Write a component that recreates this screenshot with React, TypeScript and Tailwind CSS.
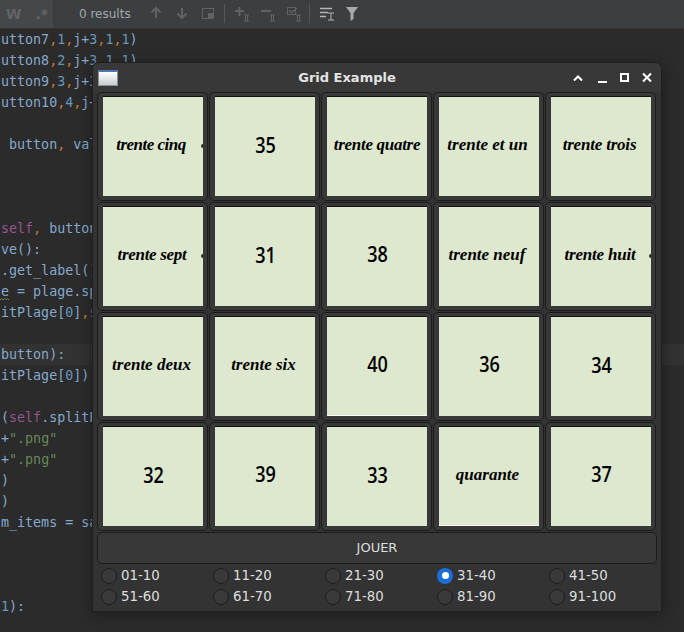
import React from "react";

const B = ({ children }: { children: React.ReactNode }) => <span className="text-[#6897bb]">{children}</span>;
const O = ({ children }: { children: React.ReactNode }) => <span className="text-[#cc7832]">{children}</span>;
const P = ({ children }: { children: React.ReactNode }) => <span className="text-[#94558d]">{children}</span>;
const G = ({ children }: { children: React.ReactNode }) => <span className="text-[#6a8759]">{children}</span>;

const codeLines: React.ReactNode[] = [
  <>utton7<O>,</O><B>1</B><O>,</O>j+<B>3</B><O>,</O><B>1</B><O>,</O><B>1</B>)</>,
  <>utton8<O>,</O><B>2</B><O>,</O>j+<B>3</B><O>,</O><B>1</B><O>,</O><B>1</B>)</>,
  <>utton9<O>,</O><B>3</B><O>,</O>j+<B>3</B><O>,</O><B>1</B><O>,</O><B>1</B>)</>,
  <>utton10<O>,</O><B>4</B><O>,</O>j+<B>3</B></>,
  "",
  <> button<O>,</O> value</>,
  "",
  "",
  "",
  <><P>self</P><O>,</O> button</>,
  "ve():",
  ".get_label()",
  "e = plage.split",
  <>itPlage[<B>0</B>]<O>,</O><P>self</P></>,
  "",
  "button):",
  <>itPlage[<B>0</B>])<O>,</O></>,
  "",
  <>(<P>self</P>.splitPlage</>,
  <>+<G>".png"</G></>,
  <>+<G>".png"</G></>,
  ")",
  ")",
  "m_items = sample",
  "",
  "",
  "",
  <><B>1</B>):</>,
];

type Card = { label: string; script?: boolean; cls: string; whiteEdge?: boolean; blob?: boolean };

const cards: Card[] = [
  { label: "trente cinq", script: true, cls: "pr-[4px] pb-[3px] tracking-[-0.5px]", blob: true },
  { label: "35", cls: "pb-[4px]" },
  { label: "trente quatre", script: true, cls: "pb-[3px] tracking-[-0.3px]" },
  { label: "trente et un", script: true, cls: "pr-[3px] pb-[3px]" },
  { label: "trente trois", script: true, cls: "pr-[3px] pb-[3px] tracking-[-0.2px]" },
  { label: "trente sept", script: true, cls: "pr-[2px] pb-[3px] tracking-[-0.3px]", blob: true },
  { label: "31", cls: "pb-[4px]" },
  { label: "38", cls: "pb-[6px]" },
  { label: "trente neuf", script: true, cls: "pr-[4px] pb-[3px]" },
  { label: "trente huit", script: true, cls: "pr-[2px] pb-[3px] tracking-[-0.2px]", blob: true },
  { label: "trente deux", script: true, cls: "pr-[3px] pb-[3px]" },
  { label: "trente six", script: true, cls: "pr-[3px] pb-[3px]" },
  { label: "40", cls: "pb-[5px]", whiteEdge: true },
  { label: "36", cls: "pb-[6px]" },
  { label: "34", cls: "pb-[4px]" },
  { label: "32", cls: "pb-[4px]" },
  { label: "39", cls: "pb-[6px]" },
  { label: "33", cls: "pb-[4px]" },
  { label: "quarante", script: true, cls: "pr-[3px] pb-[3px]", whiteEdge: true },
  { label: "37", cls: "pb-[6px]" },
];

const ranges = ["01-10", "11-20", "21-30", "31-40", "41-50", "51-60", "61-70", "71-80", "81-90", "91-100"];

function ToolbarIcons() {
  const dim = "#5f6365";
  return (
    <svg width="240" height="28" viewBox="0 0 240 28" className="shrink-0">
      {/* arrows */}
      <path d="M11 18V8M6.5 12.5L11 8l4.500 4.500" stroke={dim} strokeWidth="2" fill="none" />
      <path d="M37 8v10M32.500 13.500L37 18l4.500-4.500" stroke={dim} strokeWidth="2" fill="none" />
      {/* in selection box */}
      <rect x="57.500" y="8.500" width="11" height="10" fill="none" stroke={dim} />
      <rect x="63" y="13" width="6" height="6" fill={dim} />
      <rect x="79" y="4" width="1" height="19" fill="#55585a" />
      {/* add / remove / toggle occurrence */}
      <path d="M90 11h9M94.500 7v9" stroke={dim} strokeWidth="2" fill="none" />
      <path d="M99 15h5M99 21h5M100.500 15v6M102.500 15v6" stroke={dim} strokeWidth="1" fill="none" />
      <path d="M116 11h10" stroke={dim} strokeWidth="2" fill="none" />
      <path d="M125 15h5M125 21h5M126.500 15v6M128.500 15v6" stroke={dim} strokeWidth="1" fill="none" />
      <rect x="142.500" y="7.500" width="8" height="7" fill="none" stroke={dim} />
      <path d="M144 10l2.500 2.500L152 8" stroke={dim} strokeWidth="1.300" fill="none" />
      <path d="M151 15h5M151 21h5M152.500 15v6M154.500 15v6" stroke={dim} strokeWidth="1" fill="none" />
      <rect x="164" y="4" width="1" height="19" fill="#55585a" />
      {/* multi line + filter */}
      <path d="M175 8.500h12M175 12.500h8M175 16.500h6M175 20.500h0" stroke="#b4b7b9" strokeWidth="1.500" fill="none" />
      <path d="M183 13h6M183 20h6M186 13v7" stroke="#b4b7b9" strokeWidth="1" fill="none" />
      <path d="M201 7h12l-4.500 6v6l-3 2v-8z" fill="#a9acae" />
    </svg>
  );
}

function WindowControls() {
  return (
    <svg width="84" height="14" viewBox="0 0 84 14" className="shrink-0">
      <path d="M1 9.500L5 5.500l4 4" stroke="#fff" strokeWidth="2" fill="none" />
      <path d="M25 11h9" stroke="#fff" strokeWidth="2" fill="none" />
      <rect x="48" y="3" width="7" height="7" fill="none" stroke="#fff" strokeWidth="2" />
      <path d="M70 2.500l8 8M78 2.500l-8 8" stroke="#fff" strokeWidth="2" fill="none" />
    </svg>
  );
}

export default function App() {
  return (
    <div className="relative w-[684px] h-[632px] overflow-hidden bg-[#2b2b2b]">
      {/* search toolbar */}
      <div className="flex h-[29px] items-stretch bg-[#3c3f41] border-b border-[#333536]">
        <div className="flex w-[54px] items-center gap-[14px] bg-[#45484a] pl-[6px] border-r border-[#393b3d] font-['DejaVu_Sans'] text-[14px] font-bold text-[#616567]">
          <span>W</span>
          <span>.*</span>
        </div>
        <div className="w-[25px]" />
        <span className="w-[66px] self-center font-['DejaVu_Sans',sans-serif] text-[12px] text-[#a2a6a8] whitespace-nowrap">0 results</span>
        <ToolbarIcons />
      </div>

      {/* editor behind the window */}
      <div className="font-['DejaVu_Sans_Mono',monospace] text-[13.33px] leading-[21px] text-[#86a8cc] whitespace-pre pl-[1px]">
        {codeLines.map((line, i) => (
          <div key={i} className={`relative h-[21px] -ml-[1px] pl-[1px] ${i === 15 ? "bg-[#323232]" : ""}`}>
            {line}
            {i === 12 && (
              <svg width="10" height="3" viewBox="0 0 10 3" className="absolute left-0 bottom-[1px]">
                <path d="M0 2l1.500-1.500L3 2l1.500-1.500L6 2l1.500-1.500L9 2" stroke="#6a8759" strokeWidth="1" fill="none" />
              </svg>
            )}
          </div>
        ))}
      </div>

      {/* grid example window */}
      <div className="absolute left-[92px] top-[62px] w-[570px] h-[550px] rounded-t-[6px] border border-[#1f1f1f] bg-[#333333] shadow-[0_2px_14px_rgba(0,0,0,0.35)] flex flex-col">
        <div className="relative flex h-[29px] shrink-0 items-center rounded-t-[6px] bg-[#383838] pl-[5px] pr-[4px]">
          <div className="h-[16px] w-[20px] border border-[#8a9099] border-t-[2px] border-t-[#4a76b8] bg-gradient-to-b from-[#ffffff] to-[#c8ccd0]" />
          <span className="flex-1 pl-[3px] text-center font-['DejaVu_Sans',sans-serif] text-[13px] font-bold text-[#e4e4e4]">Grid Example</span>
          <WindowControls />
        </div>

        <div className="px-[4px] flex flex-col">
          <div className="grid grid-cols-[repeat(5,111px)] gap-[1px]">
            {cards.map((c) => (
              <div key={c.label} className="h-[109px] rounded-[5px] border border-[#1c1c1c] bg-[#383838] px-[5px] pt-[3px]">
                <div className={`relative flex h-[100px] w-[100px] items-center justify-center overflow-hidden border-t border-[#101010] bg-[#dee8cf] text-black ${c.whiteEdge ? "border-b border-b-white" : ""} ${c.cls} ${c.script ? "font-['Liberation_Serif',serif] italic font-bold text-[17px]" : "font-['Open_Sans',sans-serif] font-semibold text-[22px]"}`}>
                  <span className={`whitespace-nowrap ${c.script ? "" : "ml-[2px] scale-x-[0.82]"}`}>{c.label}</span>
                  {c.blob && <span className="absolute right-0 top-[47px] h-[4px] w-[2px] rounded-l-full bg-[#2a2a20]" />}
                </div>
              </div>
            ))}
          </div>

          <div className="mt-[1px] flex h-[32px] items-center justify-center rounded-[5px] border border-[#1c1c1c] bg-[#383838] font-['DejaVu_Sans',sans-serif] text-[13px] text-[#dddddd]">
            JOUER
          </div>

          <div className="mt-[1px] grid grid-cols-[repeat(5,111px)] gap-x-[1px]">
            {ranges.map((r) => (
              <div key={r} className="flex h-[21px] items-center gap-[4px] pl-[4px] font-['DejaVu_Sans',sans-serif] text-[13.33px] text-[#dddddd]">
                {r === "31-40" ? (
                  <span className="flex h-[16px] w-[16px] items-center justify-center rounded-full bg-[#1a6fd8]">
                    <span className="h-[7px] w-[7px] rounded-full bg-white" />
                  </span>
                ) : (
                  <span className="h-[16px] w-[16px] rounded-full border border-[#1c1c1c] bg-[#3a3a3a]" />
                )}
                <span>{r}</span>
              </div>
            ))}
          </div>
        </div>
      </div>
    </div>
  );
}
